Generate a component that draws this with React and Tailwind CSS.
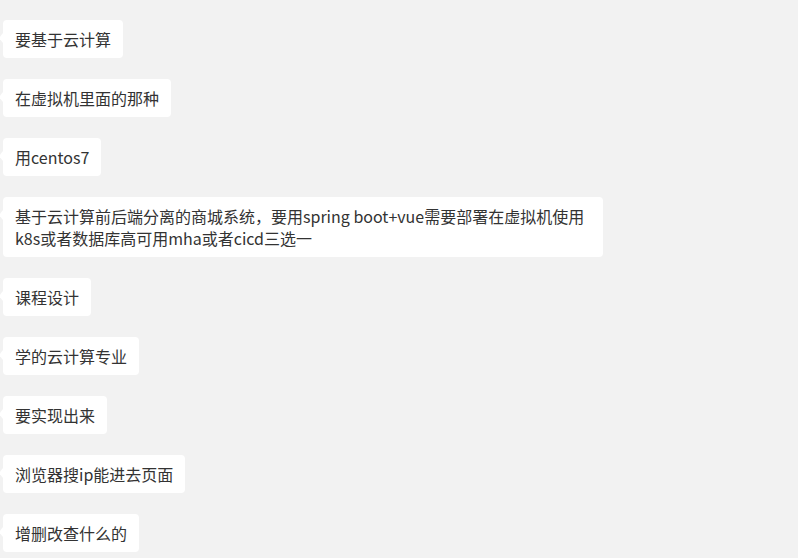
const messages = [
  "要基于云计算",
  "在虚拟机里面的那种",
  "用centos7",
  ["基于云计算前后端分离的商城系统，要用spring boot+vue需要部署在虚拟机使用", "k8s或者数据库高可用mha或者cicd三选一"],
  "课程设计",
  "学的云计算专业",
  "要实现出来",
  "浏览器搜ip能进去页面",
  "增删改查什么的",
];

const Bubble = ({ text }) => (
  <div
    className={
      Array.isArray(text)
        ? "relative w-[600px] bg-white rounded-[4px] px-3 py-2 text-[16px] leading-[22px] text-[#333333]"
        : "relative w-fit bg-white rounded-[4px] px-3 py-2 text-[16px] leading-[22px] text-[#333333]"
    }
  >
    <span className="absolute -left-[4px] top-[13px] w-0 h-0 border-y-[5px] border-y-transparent border-r-[4px] border-r-white" />
    {Array.isArray(text)
      ? text.map((line, i) => (
          <div key={i} className="whitespace-nowrap">{line}</div>
        ))
      : <div className="whitespace-nowrap">{text}</div>}
  </div>
);

export default function App() {
  return (
    <div
      className="w-[798px] h-[558px] overflow-hidden bg-[#f2f2f2] pl-[3px] pt-[20px] flex flex-col gap-[21px]"
      style={{ fontFamily: '"Microsoft YaHei", "Noto Sans CJK SC", sans-serif' }}
    >
      {messages.map((m, i) => (
        <Bubble key={i} text={m} />
      ))}
    </div>
  );
}
